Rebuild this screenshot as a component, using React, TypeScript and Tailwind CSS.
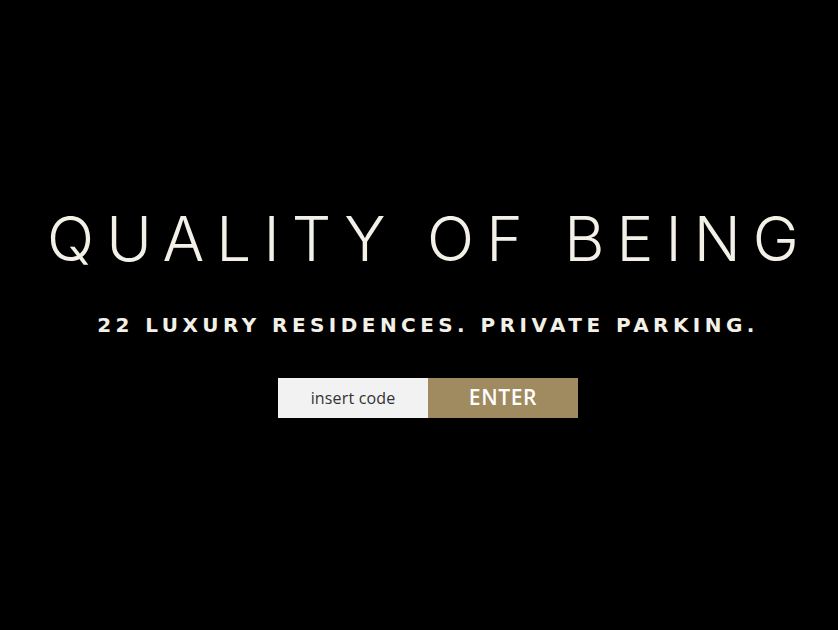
export default function App() {
  return (
    <div className="w-[838px] h-[630px] bg-black flex flex-col items-center pl-[18px]">
      <h1 className="mt-[203px] text-[62px] leading-[72px] tracking-[0.194em] text-[#f3f0e8] font-light whitespace-nowrap pl-[2px] font-['Inter',_sans-serif]">
        QUALITY OF BEING
      </h1>
      <p className="mt-[38px] text-[20px] leading-[24px] font-bold tracking-[0.222em] text-[#f3f0e8] whitespace-nowrap font-['DejaVu_Sans',_sans-serif]">
        22 LUXURY RESIDENCES. PRIVATE PARKING.
      </p>
      <div className="mt-[41px] flex font-['Open_Sans',_sans-serif]">
        <div className="w-[150px] h-[40px] bg-[#f2f2f2] flex items-center justify-center text-[16px] tracking-[0.01em] text-[#333]">insert code</div>
        <div className="w-[150px] h-[40px] bg-[#a08b60] flex items-center justify-center text-[21px] font-semibold tracking-[0.03em] text-white">ENTER</div>
      </div>
    </div>
  );
}
